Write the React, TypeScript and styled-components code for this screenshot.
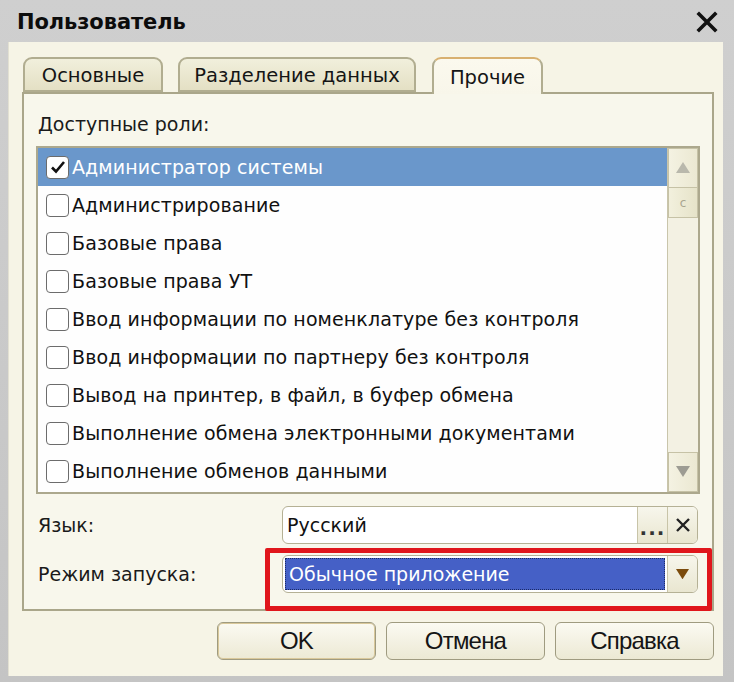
import React from "react";
import styled, { createGlobalStyle } from "styled-components";

const GlobalStyle = createGlobalStyle`
  html, body {
    margin: 0;
    padding: 0;
    background: #c6c6c6;
  }
  * {
    box-sizing: border-box;
  }
`;

const Window = styled.div`
  width: 734px;
  height: 682px;
  display: flex;
  flex-direction: column;
  background: linear-gradient(#cfcfcf, #c4c4c4);
  font-family: "DejaVu Sans", "Liberation Sans", sans-serif;
  color: #111;
  position: relative;
  overflow: hidden;
`;

const TitleBar = styled.div`
  height: 42px;
  flex: none;
  display: flex;
  align-items: center;
  justify-content: space-between;
  padding: 2px 16px 0 17px;
`;

const Title = styled.div`
  font-size: 21px;
  font-weight: bold;
  letter-spacing: -0.1px;
  color: #0c0c0c;
`;

const CloseIcon = styled.svg`
  width: 22px;
  height: 22px;
`;

const Body = styled.div`
  flex: 1;
  margin: 0 11px 6px 8px;
  background: #f6f4e6;
  border-left: 1px solid #e2e0d2;
  padding: 15px 9px 0 13px;
  display: flex;
  flex-direction: column;
`;

const TabBar = styled.div`
  display: flex;
  height: 35px;
  padding-left: 1px;
  align-items: flex-end;
`;

const Tab = styled.div<{ $w: number; $gap: number; $active?: boolean }>`
  width: ${(p) => p.$w}px;
  margin-right: ${(p) => p.$gap}px;
  height: ${(p) => (p.$active ? 37 : 35)}px;
  margin-bottom: ${(p) => (p.$active ? -2 : 0)}px;
  position: relative;
  z-index: ${(p) => (p.$active ? 2 : 1)};
  border: 2px solid #b1ad90;
  border-bottom: ${(p) => (p.$active ? "none" : "2px solid #b1ad90")};
  border-top-color: ${(p) => (p.$active ? "#d8b070" : "#b1ad90")};
  border-radius: 9px 9px 0 0;
  background: ${(p) =>
    p.$active
      ? "linear-gradient(#fbf9ee, #f8f6ea)"
      : "linear-gradient(#f1efdc, #e4e0c4)"};
  display: flex;
  align-items: center;
  justify-content: center;
  font-size: 19.5px;
  padding-top: 2px;
  color: #151515;
`;

const Panel = styled.div`
  width: 692px;
  height: 519px;
  border: 2px solid #aaa68a;
  background: #f8f7ec;
  display: flex;
  flex-direction: column;
  padding: 0 12px 0 12px;
`;

const SectionLabel = styled.div`
  font-size: 19px;
  height: 52px;
  padding: 19px 0 0 2px;
  color: #1a1a1a;
`;

const List = styled.div`
  height: 348px;
  border: 2px solid #aca88d;
  background: #fefefe;
  display: flex;
`;

const Rows = styled.div`
  flex: 1;
  display: flex;
  flex-direction: column;
`;

const Row = styled.div<{ $selected?: boolean }>`
  height: 38px;
  display: flex;
  align-items: center;
  padding-left: 8px;
  gap: 3px;
  font-size: 19px;
  letter-spacing: 0.1px;
  white-space: nowrap;
  background: ${(p) => (p.$selected ? "#6a97cb" : "transparent")};
  color: ${(p) => (p.$selected ? "#ffffff" : "#111")};
`;

const Check = styled.div`
  width: 23px;
  height: 23px;
  flex: none;
  border: 1.5px solid #6c6c6c;
  border-radius: 4px;
  background: #fff;
  display: flex;
  align-items: center;
  justify-content: center;
`;

const ScrollBar = styled.div`
  width: 31px;
  flex: none;
  background: #f3f1e3;
  border-left: 1px solid #c9c5ab;
  display: flex;
  flex-direction: column;
`;

const ScrollButton = styled.div`
  height: 40px;
  border: 1px solid #c6c2a6;
  background: linear-gradient(90deg, #f4f2e2, #ebe8d2);
  display: flex;
  align-items: center;
  justify-content: center;
`;

const Thumb = styled.div`
  height: 30px;
  border: 1px solid #c6c2a6;
  border-top: none;
  background: linear-gradient(90deg, #f2f0dd, #e6e3c9);
  display: flex;
  align-items: center;
  justify-content: center;
  font-size: 12px;
  color: #a9a68f;
`;

const Track = styled.div`
  flex: 1;
`;

const FormRow = styled.div<{ $top: number }>`
  display: flex;
  align-items: center;
  margin-top: ${(p) => p.$top}px;
  height: 38px;
`;

const FieldLabel = styled.div`
  width: 246px;
  padding-left: 2px;
  font-size: 19px;
  color: #1a1a1a;
`;

const Field = styled.div`
  width: 416px;
  height: 38px;
  display: flex;
  border: 1.5px solid #b5b195;
  border-radius: 6px;
  background: #fff;
  overflow: hidden;
`;

const FieldValue = styled.div<{ $highlight?: boolean }>`
  flex: 1;
  display: flex;
  align-items: center;
  font-size: 19px;
  padding-left: 4px;
  ${(p) =>
    p.$highlight
      ? `
    margin: 2px;
    background: #4560c6;
    color: #fff;
    outline: 1px dotted #1b2a66;
    outline-offset: -1px;
  `
      : "color: #111;"}
`;

const FieldButton = styled.div`
  width: 30px;
  flex: none;
  border-left: 1.5px solid #c8c4a8;
  background: linear-gradient(#f7f6ec, #e9e6d0);
  display: flex;
  align-items: center;
  justify-content: center;
  font-size: 20px;
  font-weight: bold;
  color: #333;
`;

const Annotation = styled.div`
  position: absolute;
  left: 265px;
  top: 548px;
  width: 447px;
  height: 63px;
  border: 5px solid #e0161c;
  border-radius: 2px;
  pointer-events: none;
`;

const ButtonBar = styled.div`
  display: flex;
  justify-content: flex-end;
  gap: 10px;
  margin-top: 11px;
  width: 692px;
`;

const Button = styled.div<{ $focused?: boolean }>`
  width: 159px;
  height: 38px;
  border: 1.5px solid #9f9b80;
  border-radius: 6px;
  background: linear-gradient(#fbfaf2, #ece9d4);
  display: flex;
  align-items: center;
  justify-content: center;
  font-family: "Liberation Sans", Arial, sans-serif;
  font-size: 24px;
  letter-spacing: -0.8px;
  color: #151515;
  ${(p) => (p.$focused ? "box-shadow: inset 0 0 0 1px #d9c89a;" : "")}
`;

const roles = [
  "Администратор системы",
  "Администрирование",
  "Базовые права",
  "Базовые права УТ",
  "Ввод информации по номенклатуре без контроля",
  "Ввод информации по партнеру без контроля",
  "Вывод на принтер, в файл, в буфер обмена",
  "Выполнение обмена электронными документами",
  "Выполнение обменов данными",
];

const Triangle: React.FC<{ down?: boolean; color: string; w?: number }> = ({
  down,
  color,
  w = 14,
}) => (
  <svg width={w} height={w * 0.8} viewBox="0 0 14 11">
    <polygon points={down ? "0,0 14,0 7,11" : "7,0 14,11 0,11"} fill={color} />
  </svg>
);

export default function App() {
  return (
    <>
      <GlobalStyle />
      <Window>
        <TitleBar>
          <Title>Пользователь</Title>
          <CloseIcon viewBox="0 0 22 22">
            <path d="M3 3 L19 19 M19 3 L3 19" stroke="#111" strokeWidth="3.6" strokeLinecap="square" />
          </CloseIcon>
        </TitleBar>
        <Body>
          <TabBar>
            <Tab $w={140} $gap={15}>Основные</Tab>
            <Tab $w={238} $gap={16}>Разделение данных</Tab>
            <Tab $w={111} $gap={0} $active>
              Прочие
            </Tab>
          </TabBar>
          <Panel>
            <SectionLabel>Доступные роли:</SectionLabel>
            <List>
              <Rows>
                {roles.map((r, i) => (
                  <Row key={r} $selected={i === 0}>
                    <Check>
                      {i === 0 && (
                        <svg width="16" height="14" viewBox="0 0 16 14">
                          <path d="M2 7.5 L6 11.5 L14 2" stroke="#111" strokeWidth="2.6" fill="none" />
                        </svg>
                      )}
                    </Check>
                    {r}
                  </Row>
                ))}
              </Rows>
              <ScrollBar>
                <ScrollButton>
                  <Triangle color="#b9b8ac" />
                </ScrollButton>
                <Thumb>c</Thumb>
                <Track />
                <ScrollButton>
                  <Triangle down color="#9d9c93" />
                </ScrollButton>
              </ScrollBar>
            </List>
            <FormRow $top={12}>
              <FieldLabel>Язык:</FieldLabel>
              <Field>
                <FieldValue>Русский</FieldValue>
                <FieldButton>
                  <span style={{ letterSpacing: 1, marginTop: 6 }}>...</span>
                </FieldButton>
                <FieldButton>
                  <svg width="16" height="16" viewBox="0 0 16 16">
                    <path d="M2 2 L14 14 M14 2 L2 14" stroke="#222" strokeWidth="2.4" />
                  </svg>
                </FieldButton>
              </Field>
            </FormRow>
            <FormRow $top={11}>
              <FieldLabel>Режим запуска:</FieldLabel>
              <Field>
                <FieldValue $highlight>Обычное приложение</FieldValue>
                <FieldButton>
                  <Triangle down color="#7b4b0c" w={13} />
                </FieldButton>
              </Field>
            </FormRow>
          </Panel>
          <ButtonBar>
            <Button $focused>OK</Button>
            <Button>Отмена</Button>
            <Button>Справка</Button>
          </ButtonBar>
        </Body>
        <Annotation />
      </Window>
    </>
  );
}
